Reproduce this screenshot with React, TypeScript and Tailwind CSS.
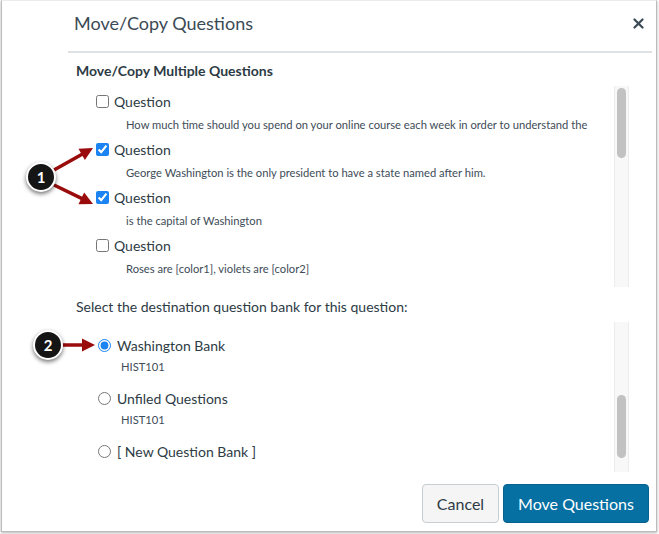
import React from 'react';

const questions = [
  { text: 'How much time should you spend on your online course each week in order to understand the', checked: false },
  { text: 'George Washington is the only president to have a state named after him.', checked: true },
  { text: 'is the capital of Washington', checked: true },
  { text: 'Roses are [color1], violets are [color2]', checked: false },
];

const banks = [
  { name: 'Washington Bank', course: 'HIST101', selected: true },
  { name: 'Unfiled Questions', course: 'HIST101', selected: false },
  { name: '[ New Question Bank ]', course: '', selected: false },
];

const arrows = [
  { x1: 54, y1: 170, x2: 93, y2: 148 },
  { x1: 54, y1: 185, x2: 93, y2: 204 },
  { x1: 62, y1: 345, x2: 95, y2: 345 },
];

const Arrow: React.FC<{ x1: number; y1: number; x2: number; y2: number }> = ({ x1, y1, x2, y2 }) => {
  const len = Math.hypot(x2 - x1, y2 - y1);
  const ux = (x2 - x1) / len;
  const uy = (y2 - y1) / len;
  const head = 13;
  const half = 6.5;
  const bx = x2 - ux * head;
  const by = y2 - uy * head;
  const pts = `${x2},${y2} ${bx - uy * half},${by + ux * half} ${bx + uy * half},${by - ux * half}`;
  return (
    <g>
      <line x1={x1} y1={y1} x2={bx + ux * 2} y2={by + uy * 2} stroke="#9a0b0b" strokeWidth={3.5} />
      <polygon points={pts} fill="#9a0b0b" />
    </g>
  );
};

const Callout: React.FC<{ n: number; className: string }> = ({ n, className }) => (
  <div
    className={`absolute w-[30px] h-[30px] rounded-full bg-[#151515] border-2 border-white shadow-[0_2px_4px_rgba(0,0,0,0.55)] flex items-center justify-center text-white text-[15px] font-bold ${className}`}
  >
    {n}
  </div>
);

const Scrollbar: React.FC<{ top: number; height: number }> = ({ top, height }) => (
  <div className="w-[15px] shrink-0 bg-[#f8f8f8] border-x border-[#ececec] relative">
    <div className="absolute left-[2px] w-[9px] rounded-full bg-[#c2c2c2]" style={{ top, height }} />
  </div>
);

export default function App() {
  return (
    <div className="relative w-[659px] h-[534px] bg-white font-['Lato','Liberation_Sans',sans-serif] text-[#2d3b45]">
      <div className="ml-[1px] w-[656px] h-[532px] border-x border-b border-t border-[#bcbcbc] border-t-[#ececec] shadow-[0_1px_3px_rgba(0,0,0,0.3)] flex flex-col">
        <div className="h-[44px] mb-[6px] flex items-center justify-between pl-[72px] pr-[12px]">
          <h1 className="text-[18px] leading-[24px] text-[#3b4a55]">Move/Copy Questions</h1>
          <svg width="11" height="11" viewBox="0 0 11 11">
            <path d="M1.5 1.5 L9.5 9.5 M9.5 1.5 L1.5 9.5" stroke="#3b4a55" strokeWidth="2.2" strokeLinecap="round" />
          </svg>
        </div>
        <div className="ml-[66px] mr-[4px] h-[2px] bg-[#dde1e4]" />

        <div className="pl-[74px] pr-[27px]">
          <h2 className="mt-[8px] h-[20px] leading-[20px] text-[14px] font-bold">Move/Copy Multiple Questions</h2>

          <div className="mt-[5px] h-[201px] flex">
            <div className="flex-1 overflow-hidden pt-[3px]">
              {questions.map((q, i) => (
                <div key={i} className="h-[48px]">
                  <label className="ml-[20px] h-[24px] flex items-center gap-[5px] text-[14px]">
                    <input type="checkbox" defaultChecked={q.checked} className="m-0 w-[13px] h-[13px] accent-[#1b83f2]" />
                    <span>Question</span>
                  </label>
                  <div className="ml-[50px] mt-[3px] h-[18px] leading-[18px] text-[11.2px] text-[#3d4c57] whitespace-nowrap">{q.text}</div>
                </div>
              ))}
              <div className="ml-[20px] h-[24px] flex items-center">
                <input type="checkbox" className="m-0 w-[13px] h-[13px] accent-[#1b83f2]" />
              </div>
            </div>
            <Scrollbar top={2} height={70} />
          </div>

          <p className="mt-[10px] h-[20px] leading-[20px] text-[14px]">Select the destination question bank for this question:</p>

          <div className="mt-[5px] h-[150px] flex">
            <div className="flex-1 overflow-hidden pt-[11px]">
              {banks.map((b, i) => (
                <div key={i} className="mb-[10px]">
                  <label className="ml-[22px] h-[24px] flex items-center gap-[6px] text-[14px]">
                    <input type="radio" name="bank" defaultChecked={b.selected} className="m-0 w-[13px] h-[13px] accent-[#1b83f2]" />
                    <span>{b.name}</span>
                  </label>
                  {b.course && <div className="ml-[45px] mt-[1px] h-[18px] leading-[18px] text-[11.2px] text-[#3d4c57]">{b.course}</div>}
                </div>
              ))}
            </div>
            <Scrollbar top={73} height={63} />
          </div>
        </div>

        <div className="mt-[12px] pr-[7px] flex justify-end gap-[4px]">
          <button className="w-[77px] h-[39px] rounded-[4px] bg-[#f5f5f5] border border-[#c7cdd1] text-[16px] text-[#2d3b45]">Cancel</button>
          <button className="w-[146px] h-[39px] rounded-[4px] bg-[#0770a3] border border-[#06638f] text-[16px] text-white">Move Questions</button>
        </div>
      </div>

      <svg className="absolute inset-0 pointer-events-none" width="659" height="534">
        {arrows.map((a, i) => (
          <Arrow key={i} {...a} />
        ))}
      </svg>
      <Callout n={1} className="left-[26px] top-[162px]" />
      <Callout n={2} className="left-[33px] top-[330px]" />
    </div>
  );
}
